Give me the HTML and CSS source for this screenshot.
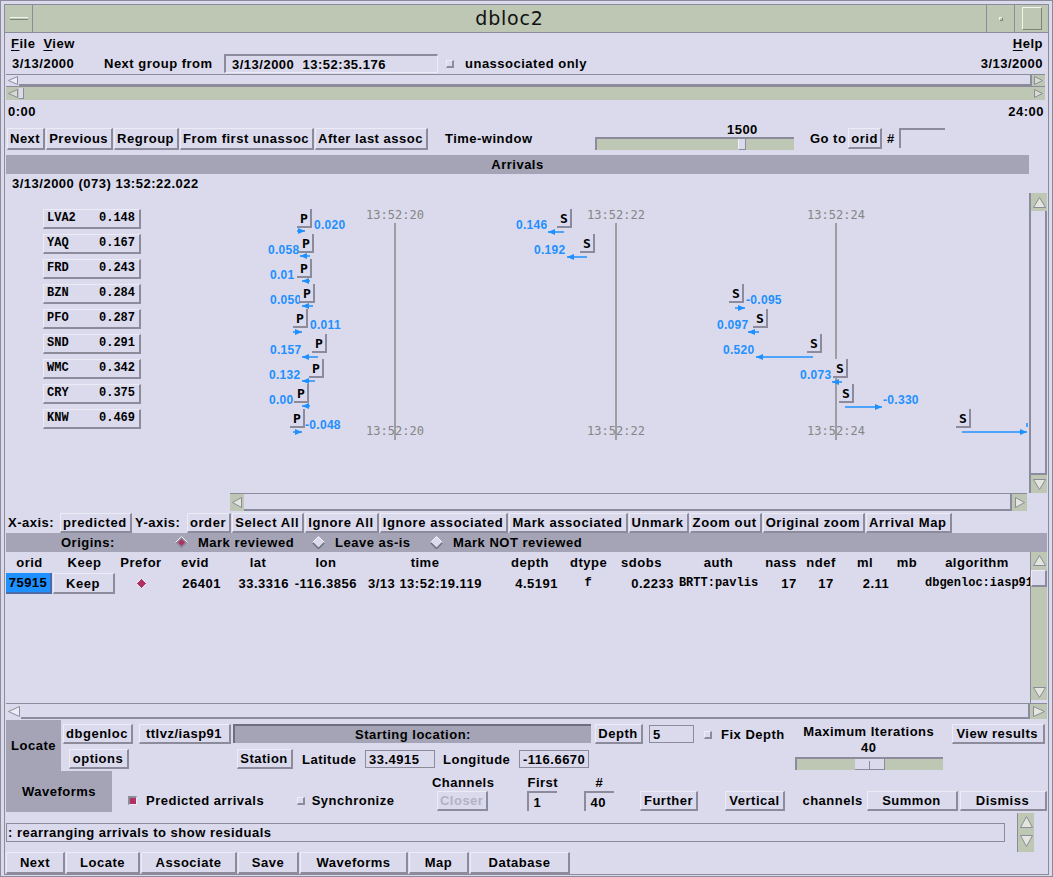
FILE: index.html
```html
<!DOCTYPE html>
<html lang="en">
<head>
<meta charset="utf-8">
<title>dbloc2</title>
<link rel="stylesheet" href="styles.css">
</head>
<body>
<div class="window">
<div class="inner">
  <div class="titlebar">
    <div class="tb-box tb-menu"><span class="tb-dash"></span></div>
    <div class="tb-title">dbloc2</div>
    <div class="tb-box tb-min"><span class="tb-dot"></span></div>
    <div class="tb-box tb-max"><span class="tb-sq"></span></div>
  </div>
  <div class="main">
    <div class="menubar">
      <span class="menu"><u>F</u>ile</span>
      <span class="menu"><u>V</u>iew</span>
      <span class="grow"></span>
      <span class="menu"><u>H</u>elp</span>
    </div>
    <div class="nextrow">
      <span class="w-date">3/13/2000</span>
      <span class="w-ngf">Next group from</span>
      <span class="field f-next">3/13/2000&nbsp; 13:52:35.176</span>
      <span class="tog tog-next"></span>
      <span class="ml-unassoc">unassociated only</span>
      <span class="grow"></span>
      <span>3/13/2000</span>
    </div>
    <div class="hs hs-top">
      <span class="arr arr-lav"><svg width="10" height="9" viewBox="0 0 10 9"><polygon points="9.5,0.5 9.5,8.5 0.5,4.5" fill="#ececf6" stroke="#8b8b9b"/></svg></span>
      <span class="hs-thumb"></span>
      <span class="arr arr-green"><svg width="9" height="9" viewBox="0 0 9 9"><polygon points="0.5,0.5 0.5,8.5 8.5,4.5" fill="#d8dccf" stroke="#8b8b9b"/></svg></span>
    </div>
    <div class="hs hs-day">
      <span class="arr"><svg width="10" height="9" viewBox="0 0 10 9"><polygon points="9.5,0.5 9.5,8.5 0.5,4.5" fill="#d8dccf" stroke="#8b8b9b"/></svg></span>
      <span class="day-trough"><span class="mini-thumb"></span></span>
      <span class="arr"><svg width="9" height="9" viewBox="0 0 9 9"><polygon points="0.5,0.5 0.5,8.5 8.5,4.5" fill="#d8dccf" stroke="#8b8b9b"/></svg></span>
    </div>
    <div class="timelabels"><span>0:00</span><span>24:00</span></div>
    <div class="btnrow">
      <span class="btn">Next</span>
      <span class="btn">Previous</span>
      <span class="btn">Regroup</span>
      <span class="btn">From first unassoc</span>
      <span class="btn">After last assoc</span>
      <span class="w-tw">Time-window</span>
      <div class="tw-slider">
        <span class="tw-val">1500</span>
        <span class="trough tw-trough"><span class="tw-thumb"></span></span>
      </div>
      <span class="ml-goto">Go to</span>
      <span class="btn btn-orid">orid</span>
      <span class="ml-hash">#</span>
      <span class="field f-orid"></span>
    </div>
    <div class="hdr hdr-arr">Arrivals</div>
    <div class="daterow">3/13/2000 (073) 13:52:22.022</div>
    <div class="plotarea">
      <div class="plotcol">
        <div class="plot">
          <div class="stations">
            <span class="sta"><span>LVA2</span><span>0.148</span></span>
            <span class="sta"><span>YAQ</span><span>0.167</span></span>
            <span class="sta"><span>FRD</span><span>0.243</span></span>
            <span class="sta"><span>BZN</span><span>0.284</span></span>
            <span class="sta"><span>PFO</span><span>0.287</span></span>
            <span class="sta"><span>SND</span><span>0.291</span></span>
            <span class="sta"><span>WMC</span><span>0.342</span></span>
            <span class="sta"><span>CRY</span><span>0.375</span></span>
            <span class="sta"><span>KNW</span><span>0.469</span></span>
          </div>
          <svg class="plot-svg" width="1023" height="300" viewBox="0 0 1023 300">
            <g class="gridl">
              <line x1="389" y1="30" x2="389" y2="247"/>
              <line x1="610" y1="30" x2="610" y2="247"/>
              <line x1="830" y1="30" x2="830" y2="247"/>
            </g>
            <g class="tlab">
              <text x="389" y="26">13:52:20</text>
              <text x="610" y="26">13:52:22</text>
              <text x="830" y="26">13:52:24</text>
              <text x="389" y="242">13:52:20</text>
              <text x="610" y="242">13:52:22</text>
              <text x="830" y="242">13:52:24</text>
            </g>
            <g class="res">
              <text x="308" y="36">0.020</text>
              <text x="262" y="61">0.058</text>
              <text x="264" y="86">0.01</text>
              <text x="264" y="111">0.050</text>
              <text x="304" y="136">0.011</text>
              <text x="264" y="161">0.157</text>
              <text x="263" y="186">0.132</text>
              <text x="263" y="211">0.00</text>
              <text x="299" y="236">-0.048</text>
              <text x="510" y="36">0.146</text>
              <text x="528" y="61">0.192</text>
              <text x="740" y="111">-0.095</text>
              <text x="711" y="136">0.097</text>
              <text x="717" y="161">0.520</text>
              <text x="794" y="186">0.073</text>
              <text x="877" y="211">-0.330</text>
            </g>
            <g class="arrs">
              <line x1="291" y1="38" x2="299" y2="38"/><polygon points="299,38 292,35 292,41"/>
              <line x1="294" y1="63" x2="304" y2="63"/><polygon points="294,63 301,60 301,66"/>
              <line x1="296" y1="88" x2="304" y2="88"/><polygon points="296,88 303,85 303,91"/>
              <line x1="296" y1="113" x2="307" y2="113"/><polygon points="296,113 303,110 303,116"/>
              <line x1="287" y1="139" x2="296" y2="139"/><polygon points="296,139 289,136 289,142"/>
              <line x1="296" y1="164" x2="312" y2="164"/><polygon points="296,164 303,161 303,167"/>
              <line x1="296" y1="188" x2="309" y2="188"/><polygon points="296,188 303,185 303,191"/>
              <line x1="296" y1="213" x2="304" y2="213"/><polygon points="296,213 303,210 303,216"/>
              <line x1="287" y1="239" x2="296" y2="239"/><polygon points="296,239 289,236 289,242"/>
              <line x1="542" y1="39" x2="558" y2="39"/><polygon points="542,39 549,36 549,42"/>
              <line x1="561" y1="64" x2="581" y2="64"/><polygon points="561,64 568,61 568,67"/>
              <line x1="729" y1="115" x2="739" y2="115"/><polygon points="739,115 732,112 732,118"/>
              <line x1="742" y1="139" x2="753" y2="139"/><polygon points="742,139 749,136 749,142"/>
              <line x1="750" y1="164" x2="807" y2="164"/><polygon points="750,164 757,161 757,167"/>
              <line x1="826" y1="189" x2="836" y2="189"/><polygon points="826,189 833,186 833,192"/>
              <line x1="839" y1="214" x2="876" y2="214"/><polygon points="876,214 869,211 869,217"/>
              <line x1="956" y1="239" x2="1021" y2="239"/><polygon points="1021,239 1014,236 1014,242"/>
              <line x1="1021" y1="230" x2="1021" y2="234"/>
            </g>
            <g class="mk">
              <rect x="291" y="16" width="15" height="19"/><path d="M305 16 V34 H291"/><text x="298" y="30">P</text>
              <rect x="293" y="41" width="15" height="19"/><path d="M307 41 V59 H293"/><text x="300" y="55">P</text>
              <rect x="291" y="66" width="15" height="19"/><path d="M305 66 V84 H291"/><text x="298" y="80">P</text>
              <rect x="294" y="91" width="15" height="19"/><path d="M308 91 V109 H294"/><text x="301" y="105">P</text>
              <rect x="287" y="116" width="15" height="19"/><path d="M301 116 V134 H287"/><text x="294" y="130">P</text>
              <rect x="306" y="141" width="15" height="19"/><path d="M320 141 V159 H306"/><text x="313" y="155">P</text>
              <rect x="303" y="166" width="15" height="19"/><path d="M317 166 V184 H303"/><text x="310" y="180">P</text>
              <rect x="288" y="191" width="15" height="19"/><path d="M302 191 V209 H288"/><text x="295" y="205">P</text>
              <rect x="284" y="216" width="15" height="19"/><path d="M298 216 V234 H284"/><text x="291" y="230">P</text>
              <rect x="551" y="16" width="15" height="19"/><path d="M565 16 V34 H551"/><text x="558" y="30">S</text>
              <rect x="574" y="41" width="15" height="19"/><path d="M588 41 V59 H574"/><text x="581" y="55">S</text>
              <rect x="723" y="91" width="15" height="19"/><path d="M737 91 V109 H723"/><text x="730" y="105">S</text>
              <rect x="747" y="116" width="15" height="19"/><path d="M761 116 V134 H747"/><text x="754" y="130">S</text>
              <rect x="801" y="141" width="15" height="19"/><path d="M815 141 V159 H801"/><text x="808" y="155">S</text>
              <rect x="827" y="166" width="15" height="19"/><path d="M841 166 V184 H827"/><text x="834" y="180">S</text>
              <rect x="833" y="191" width="15" height="19"/><path d="M847 191 V209 H833"/><text x="840" y="205">S</text>
              <rect x="950" y="216" width="15" height="19"/><path d="M964 216 V234 H950"/><text x="957" y="230">S</text>
            </g>
          </svg>
        </div>
        <div class="phs">
          <span class="arr arr-green phs-l"><svg width="10" height="11" viewBox="0 0 10 11"><polygon points="9.5,0.5 9.5,10.5 0.5,5.5" fill="#e4e6de" stroke="#8b8b9b"/></svg></span>
          <span class="hs-thumb"></span>
          <span class="arr arr-green phs-r"><svg width="10" height="11" viewBox="0 0 10 11"><polygon points="0.5,0.5 0.5,10.5 9.5,5.5" fill="#e4e6de" stroke="#8b8b9b"/></svg></span>
        </div>
      </div>
      <div class="pvs">
        <span class="arr arr-green pvs-a"><svg width="13" height="11" viewBox="0 0 13 11"><polygon points="0.5,10.5 12.5,10.5 6.5,0.5" fill="#e4e6de" stroke="#8b8b9b"/></svg></span>
        <span class="pvs-thumb"></span>
        <span class="arr arr-green pvs-a"><svg width="13" height="11" viewBox="0 0 13 11"><polygon points="0.5,0.5 12.5,0.5 6.5,10.5" fill="#e4e6de" stroke="#8b8b9b"/></svg></span>
      </div>
    </div>
    <div class="axisrow">
      <span class="w-xaxis">X-axis:</span>
      <span class="btn btn-s">predicted</span>
      <span class="w-yaxis">Y-axis:</span>
      <span class="btn btn-s">order</span>
      <span class="btn btn-s">Select All</span>
      <span class="btn btn-s">Ignore All</span>
      <span class="btn btn-s">Ignore associated</span>
      <span class="btn btn-s">Mark associated</span>
      <span class="btn btn-s">Unmark</span>
      <span class="btn btn-s">Zoom out</span>
      <span class="btn btn-s">Original zoom</span>
      <span class="btn btn-s">Arrival Map</span>
    </div>
    <div class="hdr hdr-orig">
      <span class="w-orig">Origins:</span>
      <svg class="dia" width="13" height="13" viewBox="0 0 13 13"><polygon points="6.5,0.5 12.5,6.5 6.5,12.5 0.5,6.5" fill="#8b8b9b"/><polyline points="0.5,6.5 6.5,0.5 12.5,6.5" fill="none" stroke="#f4f4fa"/><polygon points="6.5,3 10,6.5 6.5,10 3,6.5" fill="#b03060"/></svg>
      <span class="w-markrev">Mark reviewed</span>
      <svg class="dia" width="13" height="13" viewBox="0 0 13 13"><polygon points="6.5,0.5 12.5,6.5 6.5,12.5 0.5,6.5" fill="#dadaec"/><polyline points="0.5,6.5 6.5,12.5 12.5,6.5" fill="none" stroke="#6e6e80" stroke-width="1.5"/><polyline points="0.5,6.5 6.5,0.5 12.5,6.5" fill="none" stroke="#f4f4fa"/></svg>
      <span class="w-leave">Leave as-is</span>
      <svg class="dia" width="13" height="13" viewBox="0 0 13 13"><polygon points="6.5,0.5 12.5,6.5 6.5,12.5 0.5,6.5" fill="#dadaec"/><polyline points="0.5,6.5 6.5,12.5 12.5,6.5" fill="none" stroke="#6e6e80" stroke-width="1.5"/><polyline points="0.5,6.5 6.5,0.5 12.5,6.5" fill="none" stroke="#f4f4fa"/></svg>
      <span class="w-marknot">Mark NOT reviewed</span>
    </div>
    <div class="tablearea">
      <div class="table">
        <div class="trow thead">
          <span>orid</span><span>Keep</span><span>Prefor</span><span>evid</span><span>lat</span><span>lon</span><span>time</span><span>depth</span><span>dtype</span><span>sdobs</span><span>auth</span><span>nass</span><span>ndef</span><span>ml</span><span>mb</span><span>algorithm</span>
        </div>
        <div class="trow tdata">
          <span class="sel">75915</span>
          <span class="btn btn-keep">Keep</span>
          <span class="c-center"><svg width="11" height="11" viewBox="0 0 11 11"><polygon points="5.5,0.5 10.5,5.5 5.5,10.5 0.5,5.5" fill="#b03060" stroke="#eaeaf4"/></svg></span>
          <span class="c-right">26401</span>
          <span class="c-right">33.3316</span>
          <span class="c-right">-116.3856</span>
          <span class="c-center">3/13 13:52:19.119</span>
          <span class="c-right c-depth">4.5191</span>
          <span class="c-center mono">f</span>
          <span class="c-right">0.2233</span>
          <span class="c-center mono">BRTT:pavlis</span>
          <span class="c-center c-nass">17</span>
          <span class="c-center c-ndef">17</span>
          <span class="c-center c-ml">2.11</span>
          <span></span>
          <span class="mono c-alg">dbgenloc:iasp91</span>
        </div>
      </div>
      <div class="tvs">
        <span class="arr tvs-a"><svg width="13" height="11" viewBox="0 0 13 11"><polygon points="0.5,10.5 12.5,10.5 6.5,0.5" fill="#e4e6de" stroke="#8b8b9b"/></svg></span>
        <span class="tvs-thumb"></span>
        <span class="tvs-trough"></span>
        <span class="arr tvs-a"><svg width="13" height="11" viewBox="0 0 13 11"><polygon points="0.5,0.5 12.5,0.5 6.5,10.5" fill="#e4e6de" stroke="#8b8b9b"/></svg></span>
        <span class="tvs-end"></span>
      </div>
    </div>
    <div class="hs ths">
      <span class="arr arr-lav ths-l"><svg width="12" height="11" viewBox="0 0 12 11"><polygon points="11.5,0.5 11.5,10.5 0.5,5.5" fill="#ececf6" stroke="#8b8b9b"/></svg></span>
      <span class="hs-thumb"></span>
      <span class="arr arr-green ths-r"><svg width="12" height="11" viewBox="0 0 12 11"><polygon points="0.5,0.5 0.5,10.5 11.5,5.5" fill="#e4e6de" stroke="#8b8b9b"/></svg></span>
    </div>
    <div class="locate">
      <div class="loc-a">
        <div class="tab tab-locate">Locate</div>
        <div class="loc-alg">
          <div class="loc-alg-top"><span class="btn b-dbgenloc">dbgenloc</span><span class="btn b-ttlvz">ttlvz/iasp91</span></div>
          <span class="btn b-options">options</span>
        </div>
        <div class="loc-start">
          <div class="startbar">Starting location:</div>
          <div class="loc-latlon">
            <span class="btn b-station">Station</span>
            <span class="w-lat">Latitude</span>
            <span class="field thin f-lat">33.4915</span>
            <span class="w-lon">Longitude</span>
            <span class="field thin f-lon">-116.6670</span>
          </div>
        </div>
        <div class="loc-depth">
          <span class="btn b-depth">Depth</span>
          <span class="field thin f-depth">5</span>
          <span class="tog tog-fix"></span>
          <span class="w-fix">Fix Depth</span>
        </div>
        <div class="maxit">
          <span class="maxit-l">Maximum Iterations</span>
          <span class="maxit-v">40</span>
          <span class="trough maxit-trough"><span class="maxit-thumb"></span></span>
        </div>
        <span class="btn b-view">View results</span>
      </div>
      <div class="loc-b">
        <div class="tab tab-wave">Waveforms</div>
        <span class="tog on tog-pred"></span>
        <span class="w-pred">Predicted arrivals</span>
        <span class="tog tog-sync"></span>
        <span class="w-sync">Synchronize</span>
        <div class="col c-chan"><span class="collbl">Channels</span><span class="btn disabled b-closer">Closer</span></div>
        <div class="col c-first"><span class="collbl">First</span><span class="field f-small">1</span></div>
        <div class="col c-num"><span class="collbl">#</span><span class="field f-small">40</span></div>
        <span class="btn b-further">Further</span>
        <span class="btn b-vertical">Vertical</span>
        <span class="w-chan">channels</span>
        <span class="btn b-summon">Summon</span>
        <span class="btn b-dismiss">Dismiss</span>
      </div>
    </div>
    <div class="statusrow">
      <span class="status">: rearranging arrivals to show residuals</span>
      <span class="svs">
        <span class="arr"><svg width="13" height="12" viewBox="0 0 13 12"><polygon points="0.5,11.5 12.5,11.5 6.5,0.5" fill="#e4e6de" stroke="#8b8b9b"/></svg></span>
        <span class="arr"><svg width="13" height="12" viewBox="0 0 13 12"><polygon points="0.5,0.5 12.5,0.5 6.5,11.5" fill="#e4e6de" stroke="#8b8b9b"/></svg></span>
      </span>
    </div>
    <div class="bottombar">
      <span class="btn bb bb-next">Next</span>
      <span class="btn bb bb-locate">Locate</span>
      <span class="btn bb bb-assoc">Associate</span>
      <span class="btn bb bb-save">Save</span>
      <span class="btn bb bb-wave">Waveforms</span>
      <span class="btn bb bb-map">Map</span>
      <span class="btn bb bb-db">Database</span>
    </div>
  </div>
</div>
</div>
</body>
</html>
```

FILE: styles.css
```css
* { box-sizing: border-box; margin: 0; padding: 0; }
html, body { width: 1053px; height: 877px; overflow: hidden; background: #dadaec; }
body {
  font-family: "Liberation Sans", Arial, sans-serif;
  font-weight: bold;
  font-size: 13px;
  letter-spacing: 0.5px;
  line-height: 15px;
  color: #000;
}
span { white-space: nowrap; }

.window { width: 1053px; height: 877px; border: 1px solid #8b8b9b; padding: 3px 3px 1px 3px; background: #dadaec; }
.inner { height: 100%; border: 1px solid #8b8b9b; display: flex; flex-direction: column; }

/* title bar */
.titlebar { flex: none; height: 28px; display: flex; background: #bec7b4; border-bottom: 1px solid #8b8b9b; }
.tb-box { flex: none; display: flex; align-items: center; justify-content: center; }
.tb-menu { width: 28px; border-right: 1px solid #8b8b9b; }
.tb-dash { width: 18px; height: 3px; border-top: 1px solid #f4f4ee; border-bottom: 1px solid #7e8478; }
.tb-title { flex: 1; text-align: center; font-family: "DejaVu Sans", sans-serif; font-weight: normal; font-size: 19px; letter-spacing: 0.8px; line-height: 27px; color: #111; }
.tb-min { width: 28px; border-left: 1px solid #8b8b9b; }
.tb-dot { width: 4px; height: 4px; border-top: 1px solid #f4f4ee; border-left: 1px solid #f4f4ee; border-right: 1px solid #7e8478; border-bottom: 1px solid #7e8478; }
.tb-max { width: 34px; border-left: 1px solid #8b8b9b; }
.tb-sq { width: 20px; height: 23px; border-top: 1px solid #f4f4ee; border-left: 1px solid #f4f4ee; border-right: 1px solid #7e8478; border-bottom: 1px solid #7e8478; }

.main { flex: 1; min-height: 0; display: flex; flex-direction: column; padding: 0 1px; }
.grow { flex: 1; }

/* generic widgets */
.btn {
  flex: none;
  display: inline-flex; align-items: center; justify-content: center;
  height: 22px; padding: 0 3px 0 2px;
  border-top: 1px solid #ececf6; border-left: 1px solid #ececf6;
  border-right: 2px solid #8b8b9b; border-bottom: 2px solid #8b8b9b;
  margin-right: 1px;
}
.field {
  flex: none;
  display: inline-flex; align-items: center;
  height: 19px; padding-left: 4px;
  border-top: 2px solid #8b8b9b; border-left: 2px solid #8b8b9b;
  border-right: 1px solid #ececf6; border-bottom: 1px solid #ececf6;
}
.field.thin { border: 1px solid #8b8b9b; padding-left: 3px; }
.tog { flex: none; width: 8px; height: 8px; border-top: 1px solid #ececf6; border-left: 1px solid #ececf6; border-right: 2px solid #8b8b9b; border-bottom: 2px solid #8b8b9b; }
.tog.on { width: 9px; height: 9px; background: #b03060; border-top: 2px solid #8b8b9b; border-left: 2px solid #8b8b9b; border-right: 1px solid #ececf6; border-bottom: 1px solid #ececf6; }
.arr { flex: none; display: flex; align-items: center; justify-content: center; }
.arr-green { background: #bec7b4; }
.trough { display: block; background: #bec7b4; border-top: 2px solid #8b8b9b; border-left: 2px solid #8b8b9b; position: relative; }
.hdr { flex: none; height: 19px; background: #a4a4b6; display: flex; align-items: center; }

/* menubar */
.menubar { flex: none; height: 20px; display: flex; align-items: center; gap: 8px; padding: 0 4px 0 5px; }
.menu u { text-decoration: underline; text-underline-offset: 2px; }

/* next row */
.nextrow { flex: none; height: 21px; display: flex; align-items: center; padding: 0 4px 0 6px; }
.w-date { width: 92px; }
.w-ngf { width: 120px; }
.f-next { width: 214px; padding-left: 6px; }
.tog-next { margin-left: 8px; margin-top: 1px; }
.ml-unassoc { margin-left: 11px; }

/* scroll bars on top */
.hs { flex: none; display: flex; }
.hs-top { height: 12px; border-top: 1px solid #8b8b9b; margin-right: 2px; }
.hs-top .arr { width: 13px; }
.hs-thumb { flex: 1; border-bottom: 2px solid #8b8b9b; border-right: 2px solid #8b8b9b; }
.hs-day { height: 14px; border-top: 1px solid #8b8b9b; background: #bec7b4; margin-right: 2px; }
.hs-day .arr { width: 13px; }
.day-trough { flex: 1; display: flex; }
.mini-thumb { width: 5px; height: 11px; margin-top: 1px; background: #dadaec; border-right: 1px solid #8b8b9b; border-bottom: 1px solid #8b8b9b; }

.timelabels { flex: none; height: 22px; display: flex; justify-content: space-between; align-items: center; padding: 0 3px 0 2px; }

/* button row */
.btnrow { flex: none; height: 31px; display: flex; align-items: flex-start; padding-top: 6px; padding-left: 1px; }
.w-tw { width: 150px; margin-left: 16px; line-height: 22px; }
.tw-slider { width: 199px; display: flex; flex-direction: column; align-items: flex-start; margin-top: -4px; }
.tw-val { line-height: 12px; height: 13px; margin-left: 132px; }
.tw-trough { width: 199px; height: 13px; }
.tw-thumb { position: absolute; left: 141px; top: 0; width: 8px; height: 11px; background: #dadaec; border-right: 1px solid #8b8b9b; border-bottom: 1px solid #8b8b9b; border-left: 1px solid #f0f0f8; }
.ml-goto { margin-left: 16px; line-height: 22px; }
.btn-orid { margin-left: 2px; height: 21px; padding: 0 2px; }
.ml-hash { margin-left: 4px; line-height: 22px; }
.f-orid { width: 46px; height: 20px; margin-left: 4px; border-right: none; border-bottom: none; }

.hdr-arr { margin-top: 2px; margin-right: 18px; justify-content: center; }
.daterow { flex: none; height: 19px; display: flex; align-items: center; padding-left: 6px; }

/* plot */
.plotarea { flex: none; height: 318px; display: flex; }
.plotcol { width: 1023px; display: flex; flex-direction: column; }
.plot { position: relative; height: 300px; }
.stations { display: flex; flex-direction: column; align-items: flex-start; gap: 5px; padding: 16px 0 0 37px; }
.sta {
  width: 98px; height: 20px; display: flex; justify-content: space-between; align-items: center;
  padding: 0 4px 0 3px;
  border-top: 1px solid #ececf6; border-left: 1px solid #ececf6;
  border-right: 2px solid #8b8b9b; border-bottom: 2px solid #8b8b9b;
  font-family: "Liberation Mono", monospace; font-size: 12px; letter-spacing: 0;
}
.plot-svg { position: absolute; left: 0; top: 0; }
.gridl line { stroke: #8a8a8a; stroke-width: 1.5; }
.tlab text { font-family: "DejaVu Sans Mono", monospace; font-weight: normal; font-size: 12px; fill: #858585; text-anchor: middle; letter-spacing: 0; }
.res text { font-family: "Liberation Sans", Arial, sans-serif; font-weight: bold; font-size: 12px; fill: #1e90ff; letter-spacing: 0.3px; }
.arrs line { stroke: #1e90ff; stroke-width: 1.5; }
.arrs polygon { fill: #1e90ff; }
.mk rect { fill: #dadaec; }
.mk path { stroke: #8b8b9b; stroke-width: 2; fill: none; }
.mk text { font-family: "DejaVu Sans Mono", monospace; font-weight: bold; font-size: 13px; text-anchor: middle; fill: #000; letter-spacing: 0; }
.phs { flex: none; margin-left: 224px; width: 797px; height: 18px; display: flex; border-top: 1px solid #8b8b9b; }
.phs-l { width: 14px; }
.phs-r { width: 15px; }
.pvs { width: 18px; height: 300px; display: flex; flex-direction: column; border-left: 2px solid #8b8b9b; }
.pvs-a { height: 18px; }
.pvs-thumb { flex: 1; border-right: 2px solid #8b8b9b; border-bottom: 2px solid #8b8b9b; }

/* axis row */
.axisrow { flex: none; height: 22px; display: flex; align-items: flex-start; padding-top: 2px; padding-left: 2px; }
.btn-s { height: 20px; letter-spacing: 0.6px; }
.w-xaxis { width: 52px; line-height: 20px; }
.w-yaxis { width: 52px; margin-left: 2px; line-height: 20px; }

/* origins header */
.hdr-orig { padding-left: 55px; }
.w-orig { width: 114px; }
.dia { flex: none; }
.w-markrev { margin-left: 10px; width: 114px; }
.w-leave { margin-left: 10px; width: 95px; }
.w-marknot { margin-left: 10px; }

/* table */
.tablearea { flex: none; height: 151px; display: flex; align-items: stretch; }
.table { width: 1024px; }
.trow { display: grid; grid-template-columns: 47px 63px 50px 58px 68px 68px 130px 80px 36px 71px 83px 42px 38px 50px 34px 106px; align-items: center; }
.thead { height: 20px; text-align: center; }
.tdata { height: 21px; margin-top: 1px; }
.sel { height: 21px; display: flex; align-items: center; justify-content: center; background: #1e90ff; border-right: 2px solid #4a6aa8; border-bottom: 2px solid #4a6aa8; margin-right: 1px; }
.btn-keep { height: 21px; }
.c-center { display: flex; justify-content: center; }
.c-right { text-align: right; padding-right: 3px; }
.c-depth { padding-right: 12px; }
.mono { font-family: "Liberation Mono", monospace; font-size: 12px; letter-spacing: 0; }
.c-nass { padding-left: 16px; }
.c-ndef { padding-left: 10px; }
.c-ml { padding-left: 22px; }
.c-alg { padding-left: 1px; }
.tvs { flex: none; width: 17px; height: 151px; display: flex; flex-direction: column; background: #bec7b4; border-left: 1px solid #8b8b9b; }
.tvs-a { height: 16px; }
.tvs-thumb { flex: none; height: 17px; margin-top: 2px; background: #dadaec; border-top: 1px solid #ececf6; border-left: 1px solid #ececf6; border-right: 2px solid #8b8b9b; border-bottom: 2px solid #8b8b9b; }
.tvs-trough { flex: 1; }
.tvs-end { flex: none; height: 3px; background: #dadaec; }
.ths { height: 16px; border-top: 1px solid #8b8b9b; }
.ths-l { width: 15px; }
.ths-r { width: 17px; }

/* locate section */
.locate { flex: none; height: 92px; margin-top: 1px; display: flex; flex-direction: column; }
.tab { flex: none; background: #a4a4b6; display: flex; align-items: center; justify-content: center; }
.loc-a { height: 51px; display: flex; align-items: flex-start; }
.tab-locate { width: 55px; height: 51px; }
.loc-alg { margin-left: 2px; width: 168px; display: flex; flex-direction: column; align-items: flex-start; padding-top: 4px; }
.loc-alg-top { display: flex; gap: 5px; }
.b-dbgenloc { width: 70px; height: 20px; }
.b-ttlvz { width: 92px; height: 20px; }
.b-options { width: 60px; height: 20px; margin-left: 6px; margin-top: 5px; }
.loc-start { margin-left: 2px; width: 358px; padding-top: 4px; display: flex; flex-direction: column; }
.startbar { height: 19px; background: #a4a4b6; border-top: 2px solid #6e6e80; border-left: 2px solid #6e6e80; display: flex; align-items: center; justify-content: center; }
.loc-latlon { display: flex; align-items: center; margin-top: 6px; padding-left: 4px; }
.b-station { width: 56px; height: 20px; }
.w-lat { margin-left: 8px; width: 63px; }
.f-lat { width: 70px; height: 18px; }
.w-lon { margin-left: 8px; width: 76px; }
.f-lon { width: 70px; height: 18px; }
.loc-depth { display: flex; align-items: center; margin-left: 4px; padding-top: 4px; }
.b-depth { width: 48px; height: 20px; }
.f-depth { width: 45px; height: 18px; margin-left: 5px; }
.tog-fix { margin-left: 10px; margin-top: 2px; }
.w-fix { margin-left: 9px; }
.maxit { width: 148px; margin-left: 10px; display: flex; flex-direction: column; align-items: center; padding-top: 5px; }
.maxit-l { line-height: 14px; }
.maxit-v { line-height: 14px; margin-top: 2px; }
.maxit-trough { width: 148px; height: 13px; margin-top: 2px; }
.maxit-thumb { position: absolute; left: 58px; top: 0; width: 30px; height: 11px; background: #dadaec; border-right: 1px solid #8b8b9b; border-bottom: 1px solid #8b8b9b; }
.maxit-thumb::after { content: ""; position: absolute; left: 14px; top: 2px; width: 1px; height: 8px; background: #8b8b9b; }
.b-view { margin-left: 9px; margin-top: 4px; width: 93px; height: 20px; }

.loc-b { height: 41px; display: flex; align-items: flex-end; }
.loc-b > * { margin-bottom: 1px; }
.tab-wave { width: 106px; height: 41px; margin-bottom: 0; align-self: stretch; }
.tog-pred { margin-left: 16px; margin-bottom: 7px; }
.w-pred { width: 154px; margin-left: 9px; line-height: 20px; }
.tog-sync { margin-bottom: 7px; }
.w-sync { width: 123px; margin-left: 7px; line-height: 20px; }
.col { display: flex; flex-direction: column; align-items: center; }
.collbl { line-height: 15px; margin-bottom: 1px; }
.c-chan { width: 63px; }
.c-first { width: 30px; margin-left: 33px; align-items: flex-start; }
.c-num { width: 30px; margin-left: 27px; }
.f-small { width: 30px; height: 20px; border-right: none; border-bottom: none; }
.b-closer { width: 51px; height: 20px; }
.disabled { color: #b2b2c6; }
.b-further { width: 58px; height: 20px; margin-left: 26px; }
.b-vertical { width: 60px; height: 20px; margin-left: 26px; }
.w-chan { width: 66px; margin-left: 16px; line-height: 20px; }
.b-summon { width: 91px; height: 20px; }
.b-dismiss { width: 87px; height: 20px; margin-left: 1px; margin-right: 0; }

/* status */
.statusrow { flex: none; height: 40px; display: flex; align-items: center; }
.status { width: 999px; height: 19px; display: flex; align-items: center; padding-left: 1px; border: 1px solid #8b8b9b; }
.svs { margin-left: 12px; width: 17px; height: 39px; display: flex; flex-direction: column; background: #bec7b4; border-left: 1px solid #8b8b9b; }
.svs .arr { height: 19px; }

/* bottom buttons */
.bottombar { flex: none; height: 22px; display: flex; }
.bb { height: 22px; padding: 0; }
.bb-next { width: 59px; }
.bb-locate { width: 74px; }
.bb-assoc { width: 96px; }
.bb-save { width: 61px; }
.bb-wave { width: 108px; }
.bb-map { width: 60px; }
.bb-db { width: 100px; }
```
